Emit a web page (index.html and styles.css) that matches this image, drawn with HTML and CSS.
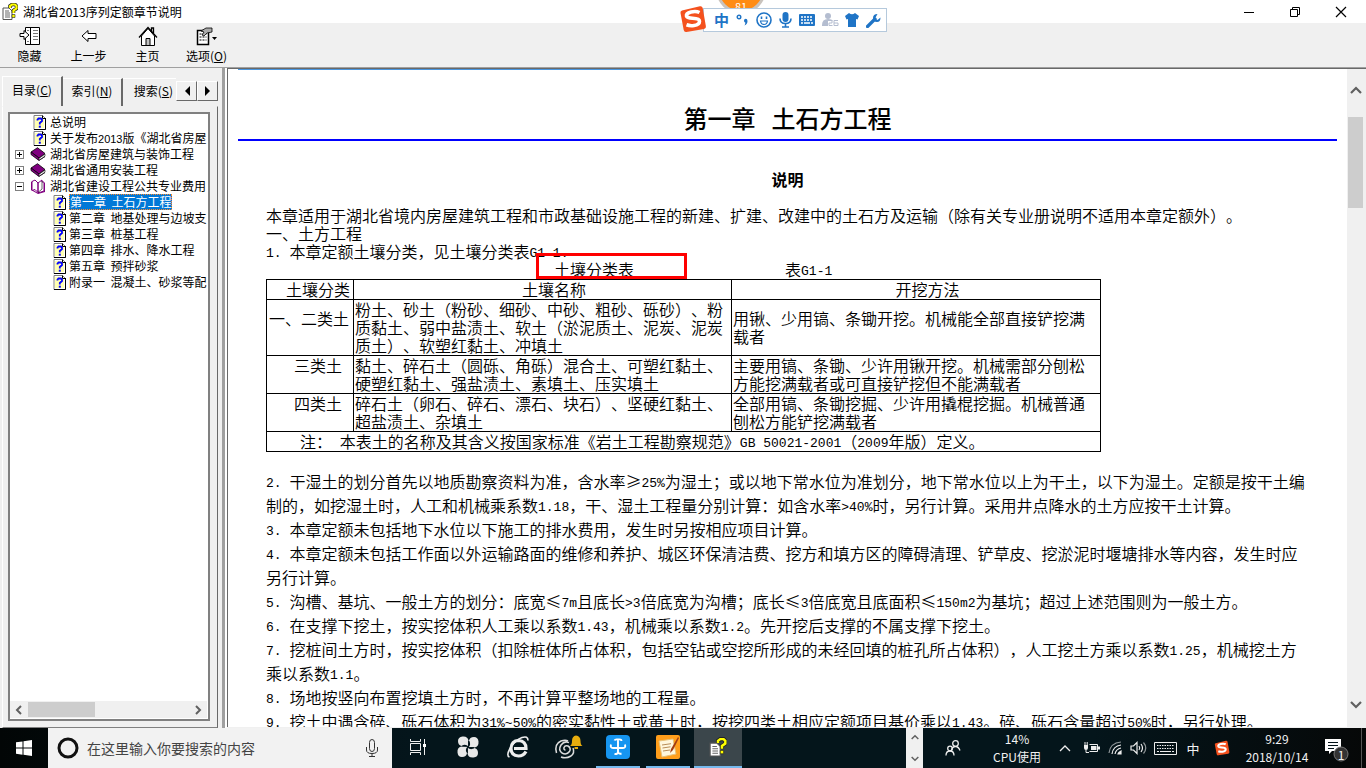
FILE: index.html
```html
<!DOCTYPE html>
<html lang="zh-CN">
<head>
<meta charset="utf-8">
<title>湖北省2013序列定额章节说明</title>
<link rel="stylesheet" href="styles.css">
</head>
<body>
<svg class="defs" aria-hidden="true">
  <symbol id="topic" viewBox="0 0 13 15">
    <path d="M1 .5h8.500l3 3v11h-11.500z" fill="#fff" stroke="#808080"/>
    <path d="M2 2h7v1h2v10H2z" fill="#ffffb0"/>
    <path d="M9.500 .5v3h3M12.500 3v11.500H1" fill="none" stroke="#000"/>
    <path d="M4.500 5.500V4.500l1-1h2.500l1 1v1.500L6.800 8v1.500" fill="none" stroke="#00f" stroke-width="1.800"/>
    <path d="M5.800 10.700h2v2h-2z" fill="#00f"/>
  </symbol>
  <symbol id="book" viewBox="0 0 16 14">
    <path d="M1 5L7.500 .7 15 6.500 9 11z" fill="#800080" stroke="#000" stroke-width=".8"/>
    <path d="M1 5v2.500l8 6L15 9.500 9 11z" fill="#800080" stroke="#000" stroke-width=".8"/>
    <path d="M9 11.200l6-4v2l-6 4z" fill="#fff" stroke="#000" stroke-width=".6"/>
  </symbol>
  <symbol id="openbook" viewBox="0 0 16 15">
    <path d="M1 3l2-1v9l5 3 6-2V4l1 0v9l-7 2-7-4z" fill="#800080"/>
    <path d="M2 2.500L5 1l3 3v9.500L5 10.500 2 11.500zM8 4l4-3v2h2v9l-6 2z" fill="#fff" stroke="#800080"/>
    <path d="M12 2v8l-4 3.500" fill="none" stroke="#000" stroke-width=".6"/>
  </symbol>
  <symbol id="help" viewBox="0 0 16 17">
    <path d="M1 5h6l3 3v8.500H1z" fill="#fff" stroke="#555"/>
    <path d="M3 8h4M3 10h5M3 12h5M3 14h5" stroke="#666"/>
    <path d="M8 5V3l2-1.500h3L14.500 3v2.500l-3 2V10" fill="none" stroke="#222" stroke-width="3.600"/>
    <path d="M8 5V3l2-1.500h3L14.500 3v2.500l-3 2V10" fill="none" stroke="#ff0" stroke-width="2.200"/>
    <path d="M10 11.500h3v3h-3z" fill="#ff0" stroke="#222" stroke-width=".6"/>
  </symbol>
  <symbol id="sogou" viewBox="0 0 28 28">
    <path d="M3 5.500Q1 6 1.500 8l3.200 17q.5 2.300 2.800 1.900L25 24q2.300-.5 1.900-2.800L23.700 3q-.5-2.200-2.800-1.800z" fill="#f4511e"/>
    <path d="M20.500 7.500Q17 5.800 12 7q-5 1.200-4.500 4 .5 2 6 2.200 7 .2 7 3 0 3.500-5.500 4.300-4 .6-7.500-.7" fill="none" stroke="#fff" stroke-width="3.600"/>
  </symbol>
  <symbol id="up" viewBox="0 0 12 8"><path d="M1 7l5-5 5 5" fill="none" stroke="#606060" stroke-width="2.200"/></symbol>
  <symbol id="down" viewBox="0 0 12 8"><path d="M1 1l5 5 5-5" fill="none" stroke="#606060" stroke-width="2.200"/></symbol>
</svg>

<header class="titlebar">
  <svg class="i16" width="16" height="17"><use href="#help"/></svg>
  <h1 class="app-name">湖北省2013序列定额章节说明</h1>
  <div class="win-buttons">
    <button type="button" aria-label="最小化"><svg width="12" height="12"><path d="M1 6.500h10" stroke="#000"/></svg></button>
    <button type="button" aria-label="还原"><svg width="12" height="12"><path d="M1.500 3.500h7v7h-7zM3.500 3V1.500h7v7H9" fill="none" stroke="#000"/></svg></button>
    <button type="button" aria-label="关闭"><svg width="12" height="12"><path d="M1 1l10 10M11 1L1 11" stroke="#000" stroke-width="1.200"/></svg></button>
  </div>
</header>

<nav class="toolbar">
  <button type="button"><svg width="22" height="20" viewBox="0 0 22 20"><path d="M6.500 1.500h14v17h-14zM11.500 1v17" fill="#fff" stroke="#000"/><path d="M14 4.500h5M14 7.500h5M14 10.500h5M14 13.500h5M8 4.500h2M8 15.500h2" stroke="#777"/><path d="M1 7.500h4v-3l5 4.500-5 4.500v-3H1z" fill="#fff" stroke="#000"/></svg>隐藏</button>
  <button type="button"><svg width="16" height="20" viewBox="0 0 16 20"><path d="M1 10l6-5.500v3h8v5H7v3z" fill="#fff" stroke="#000"/></svg>上一步</button>
  <button type="button"><svg width="20" height="20" viewBox="0 0 20 20"><path d="M3.500 10v9.500h13V10L10 2.500z" fill="#fff" stroke="#000"/><path d="M1 11.500L10 1.500l9 10M15.500 7V2h-2v3" fill="none" stroke="#000" stroke-width="1.300"/><path d="M8 12.500h4v7H8z" fill="#c0c0c0" stroke="#000"/></svg>主页</button>
  <button type="button"><svg width="22" height="20" viewBox="0 0 22 20"><path d="M1.500 4.500h11v14h-11z" fill="#fff" stroke="#000" stroke-width="1.500"/><path d="M3.500 8h7M3.500 11h7M3.500 14h7" stroke="#000" stroke-dasharray="2 1"/><path d="M5 5l5-3h6v4l-5 1-3 3-2-1 2-3z" fill="#aaa" stroke="#000" stroke-width=".8"/><path d="M16 11h5l-2.500 3z"/></svg><span>选项(<u>O</u>)</span></button>
</nav>

<main class="workspace">
  <aside class="sidebar">
    <div class="tabs" role="tablist">
      <button type="button" role="tab" class="tab active" aria-selected="true">目录(<u>C</u>)</button>
      <button type="button" role="tab" class="tab">索引(<u>N</u>)</button>
      <button type="button" role="tab" class="tab last">搜索(<u>S</u>)</button>
      <button type="button" class="spin" aria-label="向左"><svg width="6" height="10"><path d="M6 0v10L1 5z"/></svg></button>
      <button type="button" class="spin" aria-label="向右"><svg width="6" height="10"><path d="M0 0v10l5-5z"/></svg></button>
    </div>
    <div class="tab-page">
      <div class="tree-box">
        <ul class="tree">
          <li><span class="toggle none"></span><span class="pic"><svg width="13" height="15"><use href="#topic"/></svg></span><span>总说明</span></li>
          <li><span class="toggle none"></span><span class="pic"><svg width="13" height="15"><use href="#topic"/></svg></span><span>关于发布<span class="num">2013</span>版《湖北省房屋</span></li>
          <li><span class="toggle plus"></span><span class="pic"><svg width="16" height="14"><use href="#book"/></svg></span><span>湖北省房屋建筑与装饰工程</span></li>
          <li><span class="toggle plus"></span><span class="pic"><svg width="16" height="14"><use href="#book"/></svg></span><span>湖北省通用安装工程</span></li>
          <li><span class="toggle"></span><span class="pic"><svg width="16" height="15"><use href="#openbook"/></svg></span><span>湖北省建设工程公共专业费用</span></li>
          <li class="child"><span class="pic"><svg width="13" height="15"><use href="#topic"/></svg></span><span class="selected">第一章&nbsp;&nbsp;土石方工程</span></li>
          <li class="child"><span class="pic"><svg width="13" height="15"><use href="#topic"/></svg></span><span>第二章&nbsp;&nbsp;地基处理与边坡支</span></li>
          <li class="child"><span class="pic"><svg width="13" height="15"><use href="#topic"/></svg></span><span>第三章&nbsp;&nbsp;桩基工程</span></li>
          <li class="child"><span class="pic"><svg width="13" height="15"><use href="#topic"/></svg></span><span>第四章&nbsp;&nbsp;排水、降水工程</span></li>
          <li class="child"><span class="pic"><svg width="13" height="15"><use href="#topic"/></svg></span><span>第五章&nbsp;&nbsp;预拌砂浆</span></li>
          <li class="child"><span class="pic"><svg width="13" height="15"><use href="#topic"/></svg></span><span>附录一&nbsp;&nbsp;混凝土、砂浆等配</span></li>
        </ul>
        <div class="hscroll">
          <svg width="8" height="12"><path d="M6 2L2 6l4 4" fill="none" stroke="#606060" stroke-width="2"/></svg>
          <span class="hthumb"></span>
          <svg width="8" height="12"><path d="M2 2l4 4-4 4" fill="none" stroke="#606060" stroke-width="2"/></svg>
        </div>
      </div>
    </div>
  </aside>
  <div class="splitter"></div>
  <section class="viewer">
    <article class="doc">
      <h2 class="chapter">第一章&nbsp;&nbsp;&nbsp;土石方工程</h2>
      <div class="body">
        <h3 class="section">说明</h3>
        <div class="intro">
          <p>本章适用于湖北省境内房屋建筑工程和市政基础设施工程的新建、扩建、改建中的土石方及运输（除有关专业册说明不适用本章定额外）。</p>
          <p>一、土方工程</p>
          <p><span class="m">1.&nbsp;</span>本章定额土壤分类，见土壤分类表<span class="m">G1-1.</span></p>
          <div class="caption"><span class="marked">土壤分类表</span><span>表<span class="m">G1-1</span></span></div>
        </div>
        <table class="soil">
          <colgroup><col class="c1"><col class="c2"><col class="c3"></colgroup>
          <thead>
            <tr><th class="in20">土壤分类</th><th class="head">土壤名称</th><th class="head">开挖方法</th></tr>
          </thead>
          <tbody>
            <tr><td class="kind">一、二类土</td><td>粉土、砂土（粉砂、细砂、中砂、粗砂、砾砂）、粉质黏土、弱中盐渍土、软土（淤泥质土、泥炭、泥炭质土）、软塑红黏土、冲填土</td><td>用锹、少用镐、条锄开挖。机械能全部直接铲挖满载者</td></tr>
            <tr><td class="kind in28">三类土</td><td>黏土、碎石土（圆砾、角砾）混合土、可塑红黏土、硬塑红黏土、强盐渍土、素填土、压实填土</td><td>主要用镐、条锄、少许用锹开挖。机械需部分刨松方能挖满载者或可直接铲挖但不能满载者</td></tr>
            <tr><td class="kind in28">四类土</td><td>碎石土（卵石、碎石、漂石、块石）、坚硬红黏土、超盐渍土、杂填土</td><td>全部用镐、条锄挖掘、少许用撬棍挖掘。机械普通刨松方能铲挖满载者</td></tr>
            <tr><td colspan="3" class="note">注：<span class="m">&nbsp;</span>本表土的名称及其含义按国家标准《岩土工程勘察规范》<span class="m">GB 50021-2001</span>（<span class="m">2009</span>年版）定义。</td></tr>
          </tbody>
        </table>
        <div class="rules">
          <p><span class="m">2.&nbsp;</span>干湿土的划分首先以地质勘察资料为准，含水率≥<span class="m">25%</span>为湿土；或以地下常水位为准划分，地下常水位以上为干土，以下为湿土。定额是按干土编制的，如挖湿土时，人工和机械乘系数<span class="m">1.18</span>，干、湿土工程量分别计算：如含水率<span class="m">&gt;40%</span>时，另行计算。采用井点降水的土方应按干土计算。</p>
          <p><span class="m">3.&nbsp;</span>本章定额未包括地下水位以下施工的排水费用，发生时另按相应项目计算。</p>
          <p><span class="m">4.&nbsp;</span>本章定额未包括工作面以外运输路面的维修和养护、城区环保清洁费、挖方和填方区的障碍清理、铲草皮、挖淤泥时堰塘排水等内容，发生时应另行计算。</p>
          <p><span class="m">5.&nbsp;</span>沟槽、基坑、一般土方的划分：底宽≤<span class="m">7m</span>且底长<span class="m">&gt;3</span>倍底宽为沟槽；底长≤<span class="m">3</span>倍底宽且底面积≤<span class="m">150m2</span>为基坑；超过上述范围则为一般土方。</p>
          <p><span class="m">6.&nbsp;</span>在支撑下挖土，按实挖体积人工乘以系数<span class="m">1.43</span>，机械乘以系数<span class="m">1.2</span>。先开挖后支撑的不属支撑下挖土。</p>
          <p><span class="m">7.&nbsp;</span>挖桩间土方时，按实挖体积（扣除桩体所占体积，包括空钻或空挖所形成的未经回填的桩孔所占体积），人工挖土方乘以系数<span class="m">1.25</span>，机械挖土方乘以系数<span class="m">1.1</span>。</p>
          <p><span class="m">8.&nbsp;</span>场地按竖向布置挖填土方时，不再计算平整场地的工程量。</p>
          <p><span class="m">9.&nbsp;</span>挖土中遇含碎、砾石体积为<span class="m">31%~50%</span>的密实黏性土或黄土时，按挖四类土相应定额项目基价乘以<span class="m">1.43</span>。碎、砾石含量超过<span class="m">50%</span>时，另行处理。</p>
        </div>
      </div>
    </article>
    <div class="vscroll">
      <svg width="12" height="8"><use href="#up"/></svg>
      <span class="vthumb"></span>
      <svg width="12" height="8"><use href="#down"/></svg>
    </div>
  </section>
</main>

<footer class="taskbar">
  <button type="button" class="start" aria-label="开始"><svg width="16" height="16"><path d="M0 2.300l6.500-.9v6.200H0zM7.500 1.200L16 0v7.600H7.500zM0 8.500h6.500v6.200L0 13.800zM7.500 8.500H16V16l-8.500-1.200z" fill="#fff"/></svg></button>
  <label class="search">
    <svg width="22" height="22"><circle cx="11" cy="11" r="9" fill="none" stroke="#111" stroke-width="3"/></svg>
    <input type="text" placeholder="在这里输入你要搜索的内容" aria-label="搜索">
    <svg width="12" height="18"><path d="M3.500 3.500q0-3 2.500-3t2.500 3v6q0 3-2.500 3t-2.500-3zM.5 8v3q0 3.500 5.500 3.500t5.500-3.500V8M6 14.500v2.500M3 17.500h6" fill="none" stroke="#333"/></svg>
  </label>
  <div class="apps">
    <button type="button" aria-label="任务视图"><svg width="18" height="18"><path d="M1.500 5.500h10v7h-10zM1.500 1v2.500h10V1M1.500 17v-2.500h10V17M15.500 1v16" fill="none" stroke="#eee"/><path d="M14 6h3v3h-3z" fill="#fff"/></svg></button>
    <button type="button" aria-label="浏览器"><svg width="24" height="24" viewBox="0 0 24 24"><g fill="#e8e8e8"><path d="M2 6q0-4 4.500-4.500Q12 1 12.500 6v5.500Q9 8.500 6 11 2 10.500 2 6z"/><path d="M18 2q4 0 4.500 4.500.5 5.500-4.500 6h-5.500Q15.500 9 13 6q.5-4 5-4z"/><path d="M22 18q0 4-4.500 4.500-5.500.5-6-4.500v-5.500Q15 15.500 18 13q4 .5 4 5z"/><path d="M6 22q-4 0-4.500-4.500-.5-5.500 4.500-6h5.500Q8.500 15 11 18q-.5 4-5 4z"/></g><path d="M12.500 6v5.500L6 11M18 12.500h-5.500L13 6M11.500 18v-5.500l6.500.5" fill="none" stroke="#04151b" stroke-width=".9"/></svg></button>
    <button type="button" aria-label="Internet Explorer"><svg width="24" height="24" viewBox="0 0 24 24"><path d="M20 16.500Q17.500 21 12.500 21 5 20.500 5 13.500 5.500 5.500 12.500 5.500q7.500.5 7.500 8H8" fill="none" stroke="#eee" stroke-width="3.200"/><path d="M3.500 22Q0 21 4 13.500 9 5 16 2.500q6-2 6 3" fill="none" stroke="#eee" stroke-width="1.600"/></svg></button>
    <button type="button" aria-label="提醒"><svg width="30" height="26" viewBox="0 0 30 26"><path d="M12.500 16q-2 0-1.500-2.500 1-2.500 4-1.500 3.500 2 1.500 5.500-3 4-7.500 1.500Q5 16 8 11q3.500-4.500 8-2.500M3.500 19Q1 10 8 7q4.500-1.500 7 0M20 14q2 5-2 8-5 3-10 1" fill="none" stroke="#ddd" stroke-width="1.500"/><path d="M17 12q2-1 2-5 0-5 4-5.500 4.500.5 4.500 5.500 0 4 2 5zM21.500 13h3.500v2h-3.500z" fill="#e8ad0e"/></svg></button>
    <button type="button" class="open" aria-label="云服务"><svg width="24" height="24" viewBox="0 0 24 24"><rect width="24" height="24" rx="4" fill="#1695f0"/><path d="M8.500 5.500Q9 4 12 4.500v12q0 3-3.500 2.500M12 4.500q3.500-.5 3.500 1.500M5 9.500Q4 13 7 13h10q3 0 2-3.500M12 16.500q.5 3 3.500 2" fill="none" stroke="#fff" stroke-width="1.900"/></svg></button>
    <button type="button" class="open" aria-label="记事"><svg width="24" height="24" viewBox="0 0 24 24"><rect width="24" height="24" rx="2" fill="#ff9e1b"/><path d="M3 6l14-2 3 15-14 3z" fill="#fff7dc" stroke="#e7c27a"/><path d="M6 10l9-1.300M6.500 13l8-1.200M7 16l7-1" stroke="#b88d58"/><path d="M22 2l-7 12-1 4 3-3 6-12z" fill="#a33d12"/></svg></button>
    <button type="button" class="open current" aria-label="帮助"><svg width="18" height="20"><use href="#help"/></svg></button>
  </div>
  <div class="tray">
    <div class="tray-scroll"><svg width="8" height="6"><use href="#up"/></svg><svg width="8" height="6"><use href="#down"/></svg></div>
    <button type="button" class="w60" aria-label="人脉"><svg width="16" height="16" fill="none" stroke="#eee" stroke-width="1.300"><circle cx="10.500" cy="3.500" r="2.800"/><path d="M6.500 10q1-3.500 4-3.500t4.500 4"/><circle cx="5" cy="8.500" r="2.300"/><path d="M1 15.500q0-4.500 4-4.500t4 4.500"/></svg></button>
    <div class="cpu"><span>14%</span><span>CPU使用</span></div>
    <button type="button" class="w28" aria-label="更多"><svg width="12" height="8"><path d="M1 7l5-5 5 5" fill="none" stroke="#eee" stroke-width="1.300"/></svg></button>
    <span class="w24"><svg width="17" height="14"><path d="M6.500 3.500h8v7h-8M3 9v2.500h3" fill="none" stroke="#eee"/><path d="M8 5h5.500v4H8zM15 5.500h2v3h-2zM1 4h4v3q0 2-2 2t-2-2zM1.500 1h1v3h-1zM3.700 1h1v3h-1z" fill="#eee"/></svg></span>
    <span class="w24"><svg width="14" height="14" fill="none" stroke="#eee" stroke-width="1.200"><path d="M1 12Q2 2 13 1" opacity=".6"/><path d="M4 13Q5 5 13 4M7 13q1-5 6-6"/><path d="M10 13q.5-2 3-3v3z" fill="#eee"/></svg></span>
    <span class="w22"><svg width="17" height="14" fill="none" stroke="#eee" stroke-width="1.200"><path d="M1 5h2.500L7 1.500v11L3.500 9H1zM9 5q1.500 2 0 4M11 3q3 4 0 8"/><path d="M13.500 1.500q4.500 5.500 0 11" opacity=".6"/></svg></span>
    <span class="w32"><svg width="23" height="13"><path d="M.5 .5h22v12H.5z" fill="none" stroke="#eee"/><path d="M3 3.500h17M3 6.500h17" stroke="#eee" stroke-dasharray="1.500 1"/><path d="M3 9.500h2M6 9.500h11M18 9.500h2" stroke="#eee"/></svg></span>
    <span class="w24 ime">中</span>
    <span class="w34"><svg width="16" height="16" viewBox="0 0 28 28"><use href="#sogou"/></svg></span>
    <div class="clock"><time>9:29</time><span>2018/10/14</span></div>
    <button type="button" class="notice" aria-label="通知"><svg width="24" height="28"><path d="M0 5h16v12H7l-3 3v-3H0z" fill="#fff"/><path d="M3 8.500h10M3 11.500h10M3 14.500h6" stroke="#04141a"/><circle cx="16" cy="20" r="7" fill="#333" stroke="#777"/></svg><span class="count">1</span></button>
    <span class="peek"></span>
  </div>
</footer>

<div class="ball">81</div>
<div class="ime-bar">
  <svg class="ime-logo" width="28" height="28"><use href="#sogou"/></svg>
  <b>中</b>
  <svg width="14" height="12"><circle cx="3" cy="3" r="1.800" fill="none" stroke="#1f74c6" stroke-width="1.400"/><path d="M8 6.500q0-1.700 1.700-1.700T11.500 7q0 3-3 4.500 1-1.500.8-3Q8 8.500 8 6.500z" fill="#1f74c6"/></svg>
  <svg width="16" height="16" fill="none" stroke="#1f74c6" stroke-width="1.600"><circle cx="8" cy="8" r="7"/><path d="M4.500 9q.5 3.500 3.500 3.500T11.500 9z" stroke-width="1.200"/><path d="M5.500 4.500v2.500M10.500 4.500v2.500"/></svg>
  <svg width="13" height="16"><rect x="3.500" y="0" width="6" height="10" rx="3" fill="#1f74c6"/><path d="M1 6.500q0 5 5.500 5t5.500-5M6.500 11v4M3 15h7" fill="none" stroke="#1f74c6" stroke-width="1.600"/></svg>
  <svg width="16" height="12"><rect width="16" height="12" rx="1" fill="#1f74c6"/><path d="M2 3h12M2 6h12" stroke="#fff" stroke-width="1.500" stroke-dasharray="2 1"/><path d="M2 9h2M5 9h6M12 9h2" stroke="#fff" stroke-width="1.500"/></svg>
  <svg width="17" height="16"><circle cx="6" cy="4" r="3" fill="#b4bdd0"/><path d="M0 13q0-6 6-6 4 0 5 2H6v5H0z" fill="#b4bdd0"/><path d="M6.500 8.500H10V11H7v2.500h3.500M16 8.500h-4v5h4V11h-4" fill="none" stroke="#b4bdd0"/></svg>
  <svg width="14" height="14"><path d="M4 0q3 2.500 6 0l4 3-1.500 3.500L11 6v8H3V6l-1.500.5L0 3z" fill="#1f74c6"/></svg>
  <svg width="15" height="15"><path d="M1.500 13.500L9 6" stroke="#1f74c6" stroke-width="3.200" stroke-linecap="round"/><path d="M11.500 1Q7 1 7 5t4 4q3.500 0 3.500-4.500L11.500 7 9 5.500z" fill="#1f74c6"/></svg>
</div>
</body>
</html>
```
FILE: styles.css
```css
*, *::after { box-sizing: border-box; }

body {
  margin: 0;
  height: 100vh;
  display: flex;
  flex-direction: column;
  overflow: hidden;
  position: relative;
  background: #f0f0f0;
  color: #000;
  font-family: "Noto Sans CJK SC", sans-serif;
  font-size: 12px;
  text-spacing-trim: space-all;
}

button {
  margin: 0;
  padding: 0;
  border: 0;
  background: none;
  color: inherit;
  font: inherit;
}

h1, h2, h3, p, ul { margin: 0; padding: 0; }
svg { flex: none; display: block; }
.defs { position: absolute; width: 0; height: 0; }

/* Title bar */
.titlebar {
  flex: none;
  display: flex;
  align-items: center;
  gap: 5px;
  height: 23px;
  padding-left: 2px;
  background: #fff;
}
.app-name { font-size: 12px; line-height: 22px; font-weight: 400; }
.win-buttons { display: flex; margin-left: auto; padding-right: 2px; }
.win-buttons button {
  display: flex;
  align-items: center;
  justify-content: center;
  width: 46px;
  height: 20px;
}

/* Toolbar */
.toolbar {
  flex: none;
  display: flex;
  height: 45px;
  border-bottom: 1px solid #a0a0a0;
}
.toolbar button {
  display: flex;
  flex-direction: column;
  align-items: center;
  gap: 2px;
  width: 59px;
  padding-top: 3px;
  line-height: 16px;
}

/* Workspace */
.workspace { flex: 1; display: flex; min-height: 0; }
.sidebar {
  flex: none;
  display: flex;
  flex-direction: column;
  width: 218px;
  padding: 8px 0 0 2px;
}
.tabs { flex: none; display: flex; align-items: flex-end; height: 30px; }
.tab {
  height: 28px;
  width: 60px;
  padding-bottom: 4px;
  border-top: 1px solid #fff;
  border-right: 2px solid #696969;
  white-space: nowrap;
}
.tab.active { width: 61px; height: 30px; border-left: 1px solid #fff; }
.tab.last { flex: 1; border-right: 0; text-align: right; padding-right: 3px; }
.spin {
  display: flex;
  align-items: center;
  justify-content: center;
  align-self: center;
  width: 21px;
  height: 20px;
  border: 1px solid;
  border-color: #fff #696969 #696969 #fff;
}
.tab-page {
  flex: 1;
  display: flex;
  min-height: 0;
  padding: 5px 7px 6px 5px;
  border: 1px solid;
  border-color: #f0f0f0 #696969 #808080 #fff;
}
.tree-box {
  flex: 1;
  min-width: 0;
  display: flex;
  flex-direction: column;
  padding: 0 1px 1px 0;
  background: #fff;
  border: 2px solid #808080;
}
.tree { flex: 1; min-height: 0; list-style: none; padding-left: 5px; }
.tree li { display: flex; align-items: center; height: 16px; line-height: 16px; white-space: nowrap; }
.tree .child { padding-left: 36px; }
.pic { flex: none; display: flex; justify-content: flex-end; width: 16px; margin-right: 4px; }
.child .pic { width: 15px; margin-right: 3px; }
.toggle {
  flex: none;
  width: 9px;
  height: 9px;
  margin-right: 6px;
  border: 1px solid #808080;
  background: linear-gradient(#000, #000) center / 5px 1px no-repeat;
}
.toggle.plus {
  background: linear-gradient(#000, #000) center / 5px 1px no-repeat,
    linear-gradient(#000, #000) center / 1px 5px no-repeat;
}
.toggle.none { visibility: hidden; }
.num { font-family: "Liberation Sans", sans-serif; font-size: 11px; }
.selected {
  height: 16px;
  line-height: 14px;
  border: 1px dotted #ff8728;
  background: #0078d7;
  color: #fff;
}
.hscroll {
  flex: none;
  display: flex;
  align-items: center;
  justify-content: space-between;
  height: 17px;
  padding: 0 5px;
  background: #f0f0f0;
}
.hthumb { width: 67px; height: 15px; margin-right: auto; margin-left: 5px; background: #cdcdcd; }
.splitter {
  flex: none;
  width: 9px;
  border-right: 2px solid #fff;
  box-shadow: inset -3px 0 #a0a0a0, inset -5px 0 #f0f0f0;
}

/* Document */
.viewer {
  flex: 1;
  display: flex;
  min-width: 0;
  margin-bottom: 1px;
  border-top: 1px solid #696969;
  border-left: 1px solid #696969;
  background: #fff;
}
.doc {
  flex: 1;
  min-width: 0;
  overflow: hidden;
  padding: 34px 10px 0;
  background: linear-gradient(90deg, #4a97e0 55%, #fff) 10px 0 / 712px 1px no-repeat #fff;
  font-size: 16px;
  font-weight: 350;
  line-height: 18px;
}
.chapter {
  padding-bottom: 6px;
  border-bottom: 2px solid #00f;
  font-size: 24px;
  line-height: 30px;
  font-weight: 500;
  text-align: center;
}
.body { padding: 29px 28px 0; }
.section { margin-bottom: 18px; font-size: 16px; line-height: 18px; font-weight: 700; text-align: center; }
.m { font-family: "Liberation Mono", monospace; font-size: 13px; line-height: 12px; vertical-align: 1px; }
.intro p { white-space: nowrap; }
.caption { display: flex; gap: 151px; padding-left: 288px; line-height: 18px; }
.marked { position: relative; }
.marked::after {
  content: "";
  position: absolute;
  left: -18px;
  top: -7px;
  width: 151px;
  height: 26px;
  border: 3px solid #f00;
}
.soil {
  width: 835px;
  table-layout: fixed;
  border-collapse: collapse;
  margin-top: 1px;
}
.soil th, .soil td {
  padding: 0 1px 1px;
  border: 1px solid #000;
  font-weight: 350;
  text-align: left;
  vertical-align: middle;
}
.c1 { width: 87px; }
.c2 { width: 378px; }
.soil .head { text-align: center; padding-left: 24px; }
.soil .kind { padding-left: 2px; padding-bottom: 19px; }
.soil .in20 { padding-left: 19px; }
.soil .in28 { padding-left: 27px; }
.soil .note { padding-left: 33px; }
.rules { margin-top: 17px; line-height: 24px; }
.vscroll {
  flex: none;
  display: flex;
  flex-direction: column;
  align-items: center;
  width: 19px;
  padding: 17px 2px 18px 0;
  background: #f0f0f0;
}
.vthumb { width: 15px; height: 91px; margin: 23px 0 auto; background: #cdcdcd; }

/* Taskbar */
.taskbar {
  flex: none;
  display: flex;
  height: 40px;
  background: linear-gradient(90deg, #020606, #04151b 30%, #04151b 80%, #060808);
  color: #f2f2f2;
}
.start { display: flex; align-items: center; justify-content: center; width: 48px; }
.search {
  display: flex;
  align-items: center;
  width: 344px;
  padding: 0 14px 0 9px;
  background: #f2f2f2;
}
.search input {
  flex: 1;
  min-width: 0;
  margin-left: 8px;
  padding: 0;
  border: 0;
  outline: 0;
  background: none;
  font: 14px "Noto Sans CJK SC", sans-serif;
}
.search input::placeholder { color: #444; opacity: 1; }
.apps { display: flex; gap: 2px; padding-left: 2px; }
.apps button { display: flex; align-items: center; justify-content: center; width: 48px; border-bottom: 2px solid transparent; }
.apps .open { border-image: linear-gradient(90deg, transparent 4px, #76b9ed 4px, #76b9ed 44px, transparent 44px) 2; }
.apps .current { background: #3b464b; border-image: none; border-bottom-color: #76b9ed; }
.tray { display: flex; align-items: stretch; margin-left: auto; }
.tray > * { display: flex; align-items: center; justify-content: center; }
.tray-scroll { flex-direction: column; gap: 16px; width: 17px; background: #f0f0f0; }
.w60 { width: 60px; }
.w34 { width: 34px; }
.w32 { width: 32px; }
.w28 { width: 28px; }
.w24 { width: 24px; }
.w22 { width: 22px; }
.cpu, .clock { flex-direction: column; width: 68px; line-height: 18px; }
.clock { width: 76px; }
.ime { font-size: 13px; }
.notice { position: relative; width: 44px; }
.count { position: absolute; left: 22px; top: 18px; width: 8px; line-height: 18px; text-align: center; }
.peek { width: 5px; margin-left: 2px; border-left: 1px solid #555; }

/* Floating input-method bar */
.ball {
  position: absolute;
  left: 716px;
  top: -36px;
  width: 50px;
  height: 50px;
  padding-top: 33px;
  border: 3px solid #c9c3bd;
  border-radius: 50%;
  background: #ff8c14;
  color: #fff;
  font-size: 11px;
  line-height: 12px;
  text-align: center;
}
.ime-bar {
  position: absolute;
  left: 703px;
  top: 8px;
  display: flex;
  align-items: center;
  justify-content: space-between;
  width: 184px;
  height: 24px;
  padding: 0 5px 0 10px;
  border: 1px solid #b5c9dc;
  background: #fff;
  color: #1f74c6;
}
.ime-bar b { font-size: 15px; line-height: 22px; }
.ime-logo { position: absolute; left: -25px; top: -4px; }
```
